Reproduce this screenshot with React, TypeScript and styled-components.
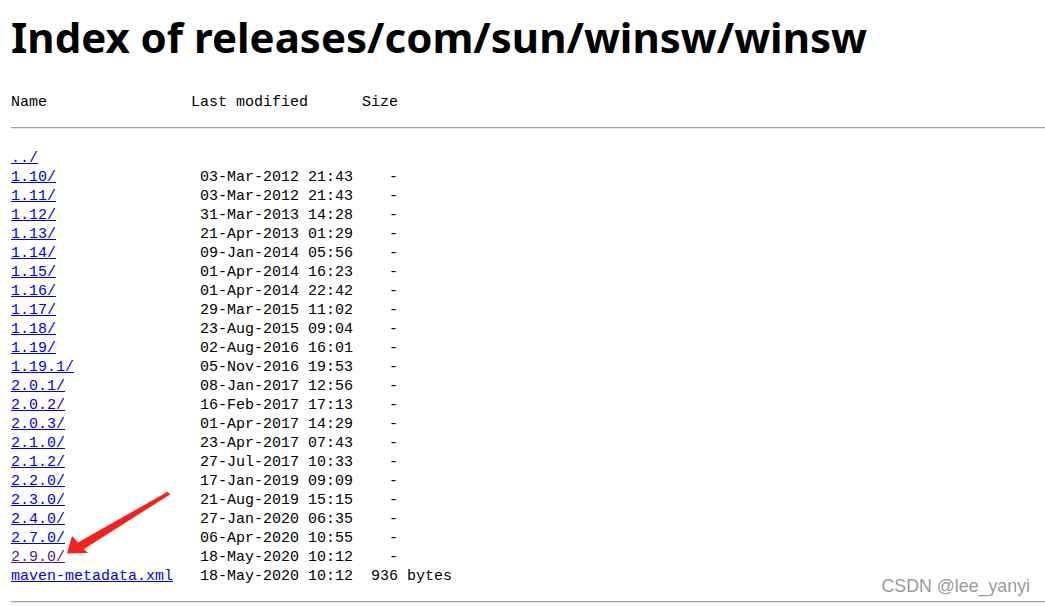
import styled, { createGlobalStyle } from "styled-components";

const GlobalStyle = createGlobalStyle`
  html, body {
    margin: 0;
    padding: 0;
    background: #ffffff;
  }
`;

const Page = styled.div`
  position: relative;
  width: 1045px;
  height: 606px;
  overflow: hidden;
  padding-left: 11px;
  box-sizing: border-box;
`;

const Title = styled.h1`
  margin: 0;
  padding-top: 10px;
  font-family: "Noto Sans", "Open Sans", sans-serif;
  font-weight: 700;
  font-size: 42px;
  line-height: 54px;
  color: #000000;
`;

const Mono = styled.pre`
  margin: 0;
  font-family: "Liberation Mono", "DejaVu Sans Mono", monospace;
  font-size: 15px;
  line-height: 19px;
  color: #000000;
`;

const Header = styled(Mono)`
  margin-top: 29px;
`;

const Rule = styled.hr<{ $top: number }>`
  margin: ${(p) => p.$top}px 0 0 0;
  border: none;
  border-top: 1px solid #a0a0a0;
  border-bottom: 1px solid #e6e6e6;
  height: 0;
`;

const Listing = styled(Mono)`
  margin-top: 20px;
`;

const Row = styled.div`
  display: flex;
  white-space: pre;
`;

const NameCell = styled.span`
  width: 21ch;
  flex: none;
`;

const Link = styled.a<{ $visited?: boolean }>`
  color: ${(p) => (p.$visited ? "#551a8b" : "#0000ee")};
  text-decoration: underline;
`;

const Watermark = styled.div`
  position: absolute;
  right: 15px;
  bottom: 9px;
  font-family: "Liberation Sans", Arial, sans-serif;
  font-size: 17.8px;
  color: #9a9a9a;
`;

const Arrow = styled.svg`
  position: absolute;
  left: 60px;
  top: 485px;
`;

type Entry = { name: string; date?: string; size?: string; visited?: boolean };

const entries: Entry[] = [
  { name: "../" },
  { name: "1.10/", date: "03-Mar-2012 21:43", size: "-" },
  { name: "1.11/", date: "03-Mar-2012 21:43", size: "-" },
  { name: "1.12/", date: "31-Mar-2013 14:28", size: "-" },
  { name: "1.13/", date: "21-Apr-2013 01:29", size: "-" },
  { name: "1.14/", date: "09-Jan-2014 05:56", size: "-" },
  { name: "1.15/", date: "01-Apr-2014 16:23", size: "-" },
  { name: "1.16/", date: "01-Apr-2014 22:42", size: "-" },
  { name: "1.17/", date: "29-Mar-2015 11:02", size: "-" },
  { name: "1.18/", date: "23-Aug-2015 09:04", size: "-" },
  { name: "1.19/", date: "02-Aug-2016 16:01", size: "-" },
  { name: "1.19.1/", date: "05-Nov-2016 19:53", size: "-" },
  { name: "2.0.1/", date: "08-Jan-2017 12:56", size: "-" },
  { name: "2.0.2/", date: "16-Feb-2017 17:13", size: "-" },
  { name: "2.0.3/", date: "01-Apr-2017 14:29", size: "-" },
  { name: "2.1.0/", date: "23-Apr-2017 07:43", size: "-" },
  { name: "2.1.2/", date: "27-Jul-2017 10:33", size: "-" },
  { name: "2.2.0/", date: "17-Jan-2019 09:09", size: "-" },
  { name: "2.3.0/", date: "21-Aug-2019 15:15", size: "-" },
  { name: "2.4.0/", date: "27-Jan-2020 06:35", size: "-" },
  { name: "2.7.0/", date: "06-Apr-2020 10:55", size: "-" },
  { name: "2.9.0/", date: "18-May-2020 10:12", size: "-", visited: true },
  { name: "maven-metadata.xml", date: "18-May-2020 10:12", size: "936 bytes" },
];

const sizeText = (size?: string) => {
  if (!size) return "";
  return size === "-" ? "    -" : "  " + size;
};

export default function App() {
  return (
    <>
      <GlobalStyle />
      <Page>
        <Title>Index of releases/com/sun/winsw/winsw</Title>
        <Header>{"Name                Last modified      Size"}</Header>
        <Rule $top={15} />
        <Listing>
          {entries.map((e) => (
            <Row key={e.name}>
              <NameCell>
                <Link href="#" $visited={e.visited}>
                  {e.name}
                </Link>
              </NameCell>
              {e.date && <span>{e.date}</span>}
              <span>{sizeText(e.size)}</span>
            </Row>
          ))}
        </Listing>
        <Rule $top={15} />
        <Arrow width="120" height="75" viewBox="0 0 120 75">
          <path
            d="M108 6.5 L110 9.5 L24 64 L28 68 L7 68.5 L12 51 L18 57.5 Z"
            fill="#f2231c"
          />
        </Arrow>
        <Watermark>CSDN @lee_yanyi</Watermark>
      </Page>
    </>
  );
}
